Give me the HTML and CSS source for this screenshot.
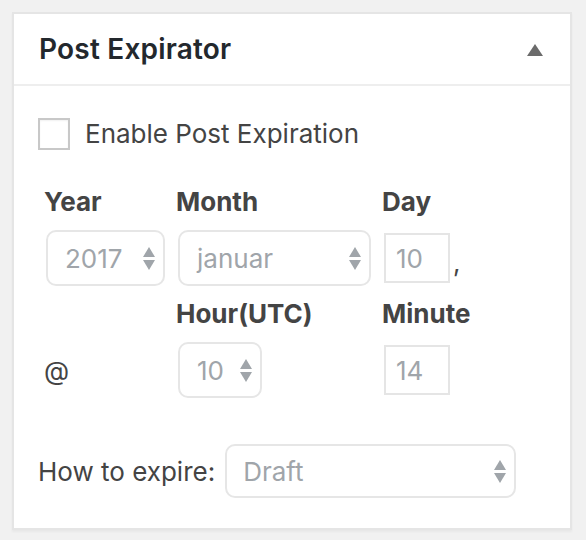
FILE: index.html
```html
<!DOCTYPE html>
<html>
<head>
<meta charset="utf-8">
<link rel="stylesheet" href="styles.css">
</head>
<body>
<div class="postbox">
  <div class="postbox-header">
    <h2 class="hndle">Post Expirator</h2>
    <svg class="toggle" width="16" height="12" viewBox="0 0 16 12"><polygon points="8,0 16,12 0,12" fill="#6b6b6b"/></svg>
  </div>
  <div class="inside">
    <label class="enable">
      <span class="checkbox"></span>
      <span>Enable Post Expiration</span>
    </label>
    <div class="date-grid">
      <div class="lbl">Year</div>
      <div class="lbl">Month</div>
      <div class="lbl">Day</div>

      <div class="cell"><div class="select w-year"><span>2017</span><svg class="arrows" width="12" height="23" viewBox="0 0 12 23"><polygon points="6,0 12,10 0,10" /><polygon points="0,13 12,13 6,23" /></svg></div></div>
      <div class="cell"><div class="select w-month"><span>januar</span><svg class="arrows" width="12" height="23" viewBox="0 0 12 23"><polygon points="6,0 12,10 0,10" /><polygon points="0,13 12,13 6,23" /></svg></div></div>
      <div class="cell"><div class="input">10</div><span class="comma">,</span></div>

      <div class="lbl"></div>
      <div class="lbl">Hour(UTC)</div>
      <div class="lbl">Minute</div>

      <div class="cell at">@</div>
      <div class="cell"><div class="select w-hour"><span>10</span><svg class="arrows" width="12" height="23" viewBox="0 0 12 23"><polygon points="6,0 12,10 0,10" /><polygon points="0,13 12,13 6,23" /></svg></div></div>
      <div class="cell"><div class="input">14</div></div>
    </div>
    <div class="expire">
      <span class="expire-label">How to expire:</span>
      <div class="select w-expire"><span>Draft</span><svg class="arrows" width="12" height="23" viewBox="0 0 12 23"><polygon points="6,0 12,10 0,10" /><polygon points="0,13 12,13 6,23" /></svg></div>
    </div>
  </div>
</div>
</body>
</html>
```

FILE: styles.css
```css
html, body {
  margin: 0;
  padding: 0;
}
body {
  background: #f1f1f1;
  padding: 12px;
  font-family: "Inter", "Roboto", "Liberation Sans", sans-serif;
  color: #444;
}
.postbox {
  width: 556px;
  background: #fff;
  border: 2px solid #e5e5e5;
  box-shadow: 0 2px 2px rgba(0,0,0,.04);
}
.postbox-header {
  display: flex;
  align-items: center;
  justify-content: space-between;
  height: 70px;
  padding: 0 27px 0 25px;
  border-bottom: 2px solid #eeeeee;
}
.hndle {
  margin: 0;
  font-size: 28px;
  font-weight: 600;
  color: #23282d;
  line-height: 70px;
  letter-spacing: 0.2px;
}
.toggle {
  display: block;
  margin-top: 2px;
}
.inside {
  padding: 32px 24px 30px 24px;
}
.enable {
  display: flex;
  align-items: center;
  gap: 15px;
  font-size: 26px;
  color: #444;
  line-height: 32px;
}
.checkbox {
  width: 28px;
  height: 28px;
  border: 2px solid #c8c8c8;
  background: #fff;
  box-shadow: inset 0 1px 2px rgba(0,0,0,.06);
}
.date-grid {
  margin-top: 34px;
  padding-left: 6px;
  display: grid;
  grid-template-columns: 132px 206px auto;
  row-gap: 10px;
}
.lbl {
  font-size: 26px;
  font-weight: 700;
  color: #444;
  line-height: 36px;
  height: 36px;
}
.cell {
  display: flex;
  align-items: center;
  height: 56px;
}
.select {
  box-sizing: border-box;
  height: 56px;
  border: 2px solid #e6e6e6;
  border-radius: 10px;
  display: flex;
  align-items: center;
  justify-content: space-between;
  padding: 0 8px 0 17px;
  font-size: 26px;
  color: #a0a5aa;
  background: #fff;
  margin-left: 2px;
}
.arrows polygon {
  fill: #a0a5aa;
}
.w-year { width: 119px; }
.w-month { width: 193px; }
.w-hour { width: 84px; }
.w-expire { width: 291px; height: 54px; padding-left: 16px; margin-left: 0; }
.input {
  box-sizing: border-box;
  width: 66px;
  height: 50px;
  border: 2px solid #e5e5e5;
  padding-left: 10px;
  display: flex;
  align-items: center;
  font-size: 26px;
  color: #a0a5aa;
  margin-left: 2px;
}
.comma {
  font-size: 26px;
  color: #444;
  margin-left: 3px;
  align-self: center;
  padding-top: 8px;
}
.at {
  font-size: 26px;
  color: #444;
  padding-top: 0;
}
.expire {
  margin-top: 46px;
  display: flex;
  align-items: center;
  gap: 10px;
}
.expire-label {
  font-size: 26px;
  color: #444;
}
```
